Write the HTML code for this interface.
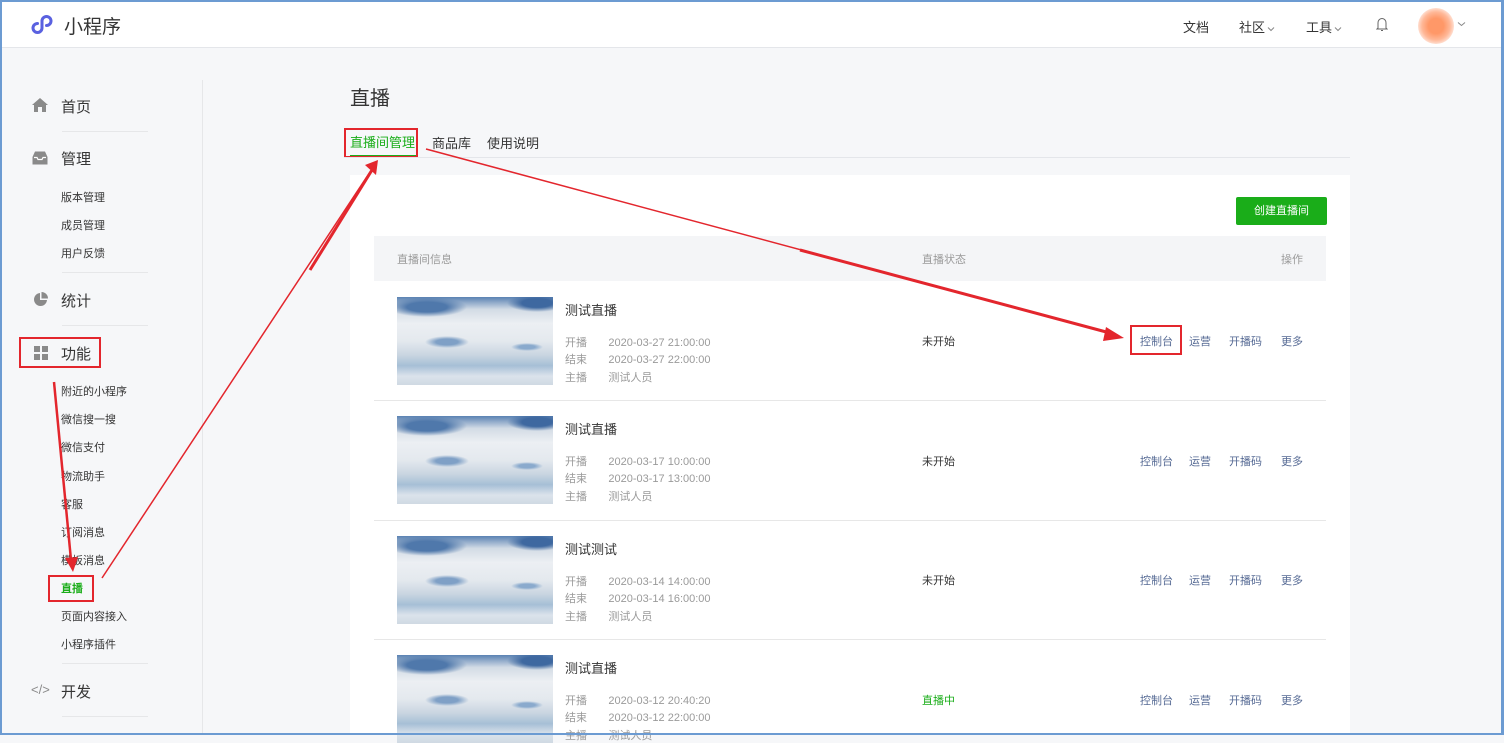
<!DOCTYPE html>
<html><head><meta charset="utf-8"><style>
*{margin:0;padding:0;box-sizing:border-box}
body{width:1504px;height:735px;overflow:hidden;background:#f6f7f9;font-family:"Liberation Sans","Noto Sans CJK SC",sans-serif;color:#353535;position:relative}
.a{position:absolute;white-space:nowrap}
.frame{position:absolute;left:0;top:0;width:1504px;height:735px;border:2px solid #6c9bd2;border-right-width:3px;pointer-events:none;z-index:10}
.hdr{position:absolute;left:0;top:0;width:1504px;height:48px;background:#fff;border-bottom:1px solid #e4e6ea}
.nav{font-size:13px;color:#353535}
.m{font-size:15px;color:#353535}
.s{font-size:11px;color:#353535}
.ln{position:absolute;height:1px;background:#e6e7e9;left:62px;width:86px}
.ic{position:absolute;background:#8a8a8a}
.thumb{position:absolute;left:397px;width:156px;height:88px;overflow:hidden;background:
radial-gradient(ellipse 22px 6px at 50px 45px,#7fa0c6 50%,transparent),
radial-gradient(ellipse 40px 10px at 30px 10px,#4f78ab 50%,transparent),
radial-gradient(ellipse 30px 9px at 140px 6px,#3e68a0 50%,transparent),
radial-gradient(ellipse 16px 4px at 130px 50px,#8aaacd 50%,transparent),
linear-gradient(180deg,#5a82b3 0%,#d2dbe5 14%,#eceff3 30%,#e4e9ee 50%,#c9d5e1 66%,#a6bfd6 78%,#dbe3eb 90%,#cfd9e3 100%)}
.t{font-size:13px;color:#353535}
.l{font-size:11px;color:#9a9a9a}
.st{font-size:11px;color:#353535}
.op{font-size:11px;color:#576b95}
.rowline{position:absolute;left:374px;width:952px;height:1px;background:#e7e7e7}
.chev{display:inline-block;vertical-align:middle;margin-left:2px}
</style></head><body>
<div class="hdr"></div>
<svg class="a" style="left:31px;top:12px" width="26" height="24" viewBox="0 0 26 24"><path d="M11 9 L11 16 A4.5 4.5 0 1 1 6.5 11.5 M11 9 A4.5 4.5 0 1 1 15.5 13.5" fill="none" stroke="#5a61e0" stroke-width="3" stroke-linecap="round"/></svg>
<div class="a" style="left:64px;top:12px;font-size:19px;color:#353535">小程序</div>
<div class="a nav" style="left:1183px;top:17px">文档</div>
<div class="a nav" style="left:1239px;top:17px">社区<svg class="chev" width="8" height="6" viewBox="0 0 8 6"><path d="M1 1.5 L4 4.5 L7 1.5" fill="none" stroke="#888" stroke-width="1"/></svg></div>
<div class="a nav" style="left:1306px;top:17px">工具<svg class="chev" width="8" height="6" viewBox="0 0 8 6"><path d="M1 1.5 L4 4.5 L7 1.5" fill="none" stroke="#888" stroke-width="1"/></svg></div>
<svg class="a" style="left:1376px;top:17px" width="12" height="15" viewBox="0 0 12 15"><path d="M2 11 L2 6 C2 3 4 1.5 6 1.5 C8 1.5 10 3 10 6 L10 11 L11 12 L1 12 Z M5 13.5 L7 13.5" fill="none" stroke="#666" stroke-width="1"/></svg>
<div class="a" style="left:1418px;top:8px;width:36px;height:36px;border-radius:50%;background:radial-gradient(circle,#ff9868 30%,#ffb898 55%,rgba(255,230,220,0.4) 80%,rgba(255,255,255,0) 100%)"></div>
<svg class="a" style="left:1457px;top:21px" width="9" height="6" viewBox="0 0 9 6"><path d="M1 1.5 L4.5 4.5 L8 1.5" fill="none" stroke="#888" stroke-width="1"/></svg>

<div class="a" style="left:202px;top:80px;width:1px;height:655px;background:#e6e7e9"></div>
<svg class="a" style="left:32px;top:98px" width="16" height="14" viewBox="0 0 16 14"><path d="M8 0 L16 7 L14 7 L14 14 L10 14 L10 9 L6 9 L6 14 L2 14 L2 7 L0 7Z" fill="#8a8a8a"/></svg>
<div class="a m" style="left:61px;top:96px">首页</div>
<div class="ln" style="top:131px"></div>
<svg class="a" style="left:32px;top:151px" width="16" height="14" viewBox="0 0 16 14"><path d="M0.5 6 L3 0.5 L13 0.5 L15.5 6 L15.5 13.5 L0.5 13.5Z" fill="#8a8a8a"/><path d="M2 6.5 L5 6.5 L6 8.5 L10 8.5 L11 6.5 L14 6.5" fill="none" stroke="#fff" stroke-width="1.2"/></svg>
<div class="a m" style="left:61px;top:148px">管理</div>
<div class="a s" style="left:61px;top:189px">版本管理</div>
<div class="a s" style="left:61px;top:217px">成员管理</div>
<div class="a s" style="left:61px;top:245px">用户反馈</div>
<div class="ln" style="top:272px"></div>
<svg class="a" style="left:33px;top:292px" width="15" height="15" viewBox="0 0 15 15"><path d="M7 1 A6.5 6.5 0 1 0 14 8 L7 8Z" fill="#8a8a8a"/><path d="M8.5 0 A6.5 6.5 0 0 1 15 6.5 L8.5 6.5Z" fill="#8a8a8a"/></svg>
<div class="a m" style="left:61px;top:290px">统计</div>
<div class="ln" style="top:325px"></div>
<div class="ic" style="left:34px;top:346px;width:6px;height:6px"></div><div class="ic" style="left:42px;top:346px;width:6px;height:6px"></div>
<div class="ic" style="left:34px;top:354px;width:6px;height:6px"></div><div class="ic" style="left:42px;top:354px;width:6px;height:6px"></div>
<div class="a m" style="left:61px;top:343px">功能</div>
<div class="a" style="left:19px;top:337px;width:82px;height:31px;border:2px solid #e3262d"></div>
<div class="a s" style="left:61px;top:383px">附近的小程序</div>
<div class="a s" style="left:61px;top:411px">微信搜一搜</div>
<div class="a s" style="left:61px;top:439px">微信支付</div>
<div class="a s" style="left:61px;top:468px">物流助手</div>
<div class="a s" style="left:61px;top:496px">客服</div>
<div class="a s" style="left:61px;top:524px">订阅消息</div>
<div class="a s" style="left:61px;top:552px">模板消息</div>
<div class="a s" style="left:61px;top:580px;color:#1aad19;font-weight:bold">直播</div>
<div class="a" style="left:48px;top:575px;width:46px;height:27px;border:2px solid #e3262d"></div>
<div class="a s" style="left:61px;top:608px">页面内容接入</div>
<div class="a s" style="left:61px;top:636px">小程序插件</div>
<div class="ln" style="top:663px"></div>
<div class="a" style="left:31px;top:682px;font-size:13px;color:#8a8a8a">&lt;/&gt;</div>
<div class="a m" style="left:61px;top:681px">开发</div>
<div class="ln" style="top:716px"></div>

<div class="a" style="left:350px;top:82px;font-size:20px;color:#353535">直播</div>
<div class="a" style="left:350px;top:132px;font-size:13px;color:#1aad19">直播间管理</div>
<div class="a" style="left:350px;top:155px;width:68px;height:2px;background:#1aad19"></div>
<div class="a" style="left:344px;top:128px;width:74px;height:30px;border:2px solid #e3262d"></div>
<div class="a" style="left:432px;top:133px;font-size:13px">商品库</div>
<div class="a" style="left:487px;top:133px;font-size:13px">使用说明</div>
<div class="a" style="left:344px;top:157px;width:1006px;height:1px;background:#e4e6ea"></div>

<div class="a" style="left:350px;top:175px;width:1000px;height:560px;background:#fff"></div>
<div class="a" style="left:1236px;top:197px;width:91px;height:28px;background:#1aad19;border-radius:2px;color:#fff;font-size:11px;text-align:center;line-height:28px">创建直播间</div>
<div class="a" style="left:374px;top:236px;width:952px;height:45px;background:#f4f5f7"></div>
<div class="a l" style="left:397px;top:251px">直播间信息</div>
<div class="a l" style="left:922px;top:251px">直播状态</div>
<div class="a l" style="left:1281px;top:251px">操作</div>

<div class="thumb" style="top:297px"></div>
<div class="a t" style="left:565px;top:300px">测试直播</div>
<div class="a l" style="left:565px;top:334px">开播&nbsp;&nbsp;&nbsp;&nbsp;&nbsp;&nbsp;&nbsp;2020-03-27 21:00:00</div>
<div class="a l" style="left:565px;top:351px">结束&nbsp;&nbsp;&nbsp;&nbsp;&nbsp;&nbsp;&nbsp;2020-03-27 22:00:00</div>
<div class="a l" style="left:565px;top:369px">主播&nbsp;&nbsp;&nbsp;&nbsp;&nbsp;&nbsp;&nbsp;测试人员</div>
<div class="a st" style="left:922px;top:333px">未开始</div>
<div class="a op" style="left:1140px;top:333px">控制台</div><div class="a op" style="left:1189px;top:333px">运营</div><div class="a op" style="left:1229px;top:333px">开播码</div><div class="a op" style="left:1281px;top:333px">更多</div>
<div class="a" style="left:1130px;top:325px;width:52px;height:30px;border:2px solid #e3262d"></div>
<div class="rowline" style="top:400px"></div>

<div class="thumb" style="top:416px"></div>
<div class="a t" style="left:565px;top:419px">测试直播</div>
<div class="a l" style="left:565px;top:453px">开播&nbsp;&nbsp;&nbsp;&nbsp;&nbsp;&nbsp;&nbsp;2020-03-17 10:00:00</div>
<div class="a l" style="left:565px;top:470px">结束&nbsp;&nbsp;&nbsp;&nbsp;&nbsp;&nbsp;&nbsp;2020-03-17 13:00:00</div>
<div class="a l" style="left:565px;top:488px">主播&nbsp;&nbsp;&nbsp;&nbsp;&nbsp;&nbsp;&nbsp;测试人员</div>
<div class="a st" style="left:922px;top:453px">未开始</div>
<div class="a op" style="left:1140px;top:453px">控制台</div><div class="a op" style="left:1189px;top:453px">运营</div><div class="a op" style="left:1229px;top:453px">开播码</div><div class="a op" style="left:1281px;top:453px">更多</div>
<div class="rowline" style="top:520px"></div>

<div class="thumb" style="top:536px"></div>
<div class="a t" style="left:565px;top:539px">测试测试</div>
<div class="a l" style="left:565px;top:573px">开播&nbsp;&nbsp;&nbsp;&nbsp;&nbsp;&nbsp;&nbsp;2020-03-14 14:00:00</div>
<div class="a l" style="left:565px;top:590px">结束&nbsp;&nbsp;&nbsp;&nbsp;&nbsp;&nbsp;&nbsp;2020-03-14 16:00:00</div>
<div class="a l" style="left:565px;top:608px">主播&nbsp;&nbsp;&nbsp;&nbsp;&nbsp;&nbsp;&nbsp;测试人员</div>
<div class="a st" style="left:922px;top:572px">未开始</div>
<div class="a op" style="left:1140px;top:572px">控制台</div><div class="a op" style="left:1189px;top:572px">运营</div><div class="a op" style="left:1229px;top:572px">开播码</div><div class="a op" style="left:1281px;top:572px">更多</div>
<div class="rowline" style="top:639px"></div>

<div class="thumb" style="top:655px"></div>
<div class="a t" style="left:565px;top:658px">测试直播</div>
<div class="a l" style="left:565px;top:692px">开播&nbsp;&nbsp;&nbsp;&nbsp;&nbsp;&nbsp;&nbsp;2020-03-12 20:40:20</div>
<div class="a l" style="left:565px;top:709px">结束&nbsp;&nbsp;&nbsp;&nbsp;&nbsp;&nbsp;&nbsp;2020-03-12 22:00:00</div>
<div class="a l" style="left:565px;top:727px">主播&nbsp;&nbsp;&nbsp;&nbsp;&nbsp;&nbsp;&nbsp;测试人员</div>
<div class="a st" style="left:922px;top:692px;color:#1aad19">直播中</div>
<div class="a op" style="left:1140px;top:692px">控制台</div><div class="a op" style="left:1189px;top:692px">运营</div><div class="a op" style="left:1229px;top:692px">开播码</div><div class="a op" style="left:1281px;top:692px">更多</div>

<svg class="a" style="left:0;top:0;z-index:5" width="1504" height="735">
<line x1="54" y1="382" x2="71" y2="560" stroke="#e3262d" stroke-width="2.5"/>
<polygon points="65,558 78,557 73,572" fill="#e3262d"/>
<line x1="102" y1="578" x2="370" y2="172" stroke="#e3262d" stroke-width="1.5"/>
<line x1="310" y1="270" x2="372" y2="170" stroke="#e3262d" stroke-width="3"/>
<polygon points="365,165 378,160 376,175" fill="#e3262d"/>
<line x1="426" y1="149" x2="1110" y2="333" stroke="#e3262d" stroke-width="1.5"/>
<line x1="800" y1="250" x2="1110" y2="333" stroke="#e3262d" stroke-width="3"/>
<polygon points="1106,327 1124,338 1103,341" fill="#e3262d"/>
</svg>
<div class="frame"></div>
</body></html>
